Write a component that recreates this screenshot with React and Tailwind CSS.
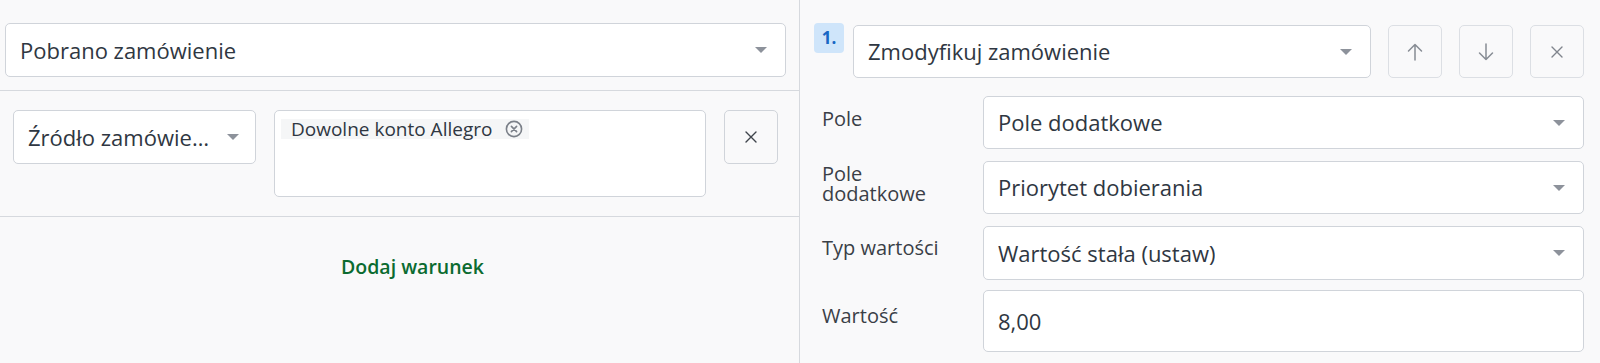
import React from "react";

function Caret() {
  return (
    <span className="block shrink-0 w-0 h-0 border-l-[6.5px] border-r-[6.5px] border-t-[6px] border-l-transparent border-r-transparent border-t-[#8d929b]" />
  );
}

function Select({ text, className = "" }) {
  return (
    <div
      className={`flex items-center justify-between bg-white border border-[#d0d4da] rounded-[5px] pl-[14px] pr-[18px] ${className}`}
    >
      <span className="text-[22px] text-[#2f3742] truncate">{text}</span>
      <Caret />
    </div>
  );
}

function XIcon({ color = "#4a4f57", size = 12 }) {
  return (
    <svg width={size} height={size} viewBox="0 0 12 12" fill="none">
      <path d="M1 1L11 11M11 1L1 11" stroke={color} strokeWidth="1.4" strokeLinecap="round" />
    </svg>
  );
}

function ArrowUp() {
  return (
    <svg width="16" height="18" viewBox="0 0 16 18" fill="none">
      <path d="M8 17V1.5M1.5 8L8 1.5L14.5 8" stroke="#878c94" strokeWidth="1.5" strokeLinecap="round" strokeLinejoin="round" />
    </svg>
  );
}

function ArrowDown() {
  return (
    <svg width="16" height="18" viewBox="0 0 16 18" fill="none">
      <path d="M8 1V16.5M1.5 10L8 16.5L14.5 10" stroke="#878c94" strokeWidth="1.5" strokeLinecap="round" strokeLinejoin="round" />
    </svg>
  );
}

function CircleX() {
  return (
    <svg width="18" height="18" viewBox="0 0 18 18" fill="none">
      <circle cx="9" cy="9" r="7.6" stroke="#7b8089" strokeWidth="1.6" />
      <path d="M6.4 6.4L11.6 11.6M11.6 6.4L6.4 11.6" stroke="#7b8089" strokeWidth="1.6" strokeLinecap="round" />
    </svg>
  );
}

function IconButton({ children }) {
  return (
    <div className="w-[54px] h-[53px] shrink-0 flex items-center justify-center border border-[#dcdfe4] rounded-[5px]">
      {children}
    </div>
  );
}

export default function App() {
  return (
    <div
      className="w-[1600px] h-[363px] bg-[#f9f9fa] flex overflow-hidden"
      style={{ fontFamily: '"Open Sans", "Noto Sans", sans-serif' }}
    >
      {/* Left panel */}
      <div className="w-[800px] shrink-0 border-r border-[#d6d9de] flex flex-col">
        <div className="pl-[5px] pr-[13px] pt-[23px] pb-[13px] border-b border-[#d6d9de]">
          <Select text="Pobrano zamówienie" className="h-[54px]" />
        </div>
        <div className="pl-[13px] pr-[21px] pt-[19px] pb-[19px] border-b border-[#d6d9de] flex items-start gap-[18px]">
          <Select
            text="Źródło zamówienia"
            className="w-[243px] h-[54px] shrink-0 !pr-[16px] gap-[18px]"
          />
          <div className="flex-1 h-[87px] bg-white border border-[#d0d4da] rounded-[5px] pl-[6px] pt-[7px]">
            <div className="inline-flex items-center gap-[13px] bg-[#f5f6f7] pl-[10px] pr-[6px] h-[20px]">
              <span className="text-[19px] text-[#2f3742] leading-[20px]">Dowolne konto Allegro</span>
              <CircleX />
            </div>
          </div>
          <div className="w-[54px] h-[54px] shrink-0 flex items-center justify-center border border-[#d0d4da] rounded-[5px]">
            <XIcon color="#3f444c" size={12} />
          </div>
        </div>
        <div className="flex justify-center pl-[26px] pt-[38px]">
          <span className="text-[19.5px] font-semibold text-[#0b6b30] leading-[24px]">Dodaj warunek</span>
        </div>
      </div>

      {/* Right panel */}
      <div className="flex-1 pl-[14px] pr-[16px] pt-[23px]">
        <div className="flex items-start">
          <div className="w-[30px] h-[30px] shrink-0 rounded-[4px] bg-[#cfe5fa] flex items-center justify-center text-[17px] font-bold text-[#1767c4]">
            1.
          </div>
          <Select text="Zmodyfikuj zamówienie" className="ml-[9px] mt-[2px] flex-1 h-[53px]" />
          <div className="flex gap-[17px] ml-[17px] mt-[2px]">
            <IconButton>
              <ArrowUp />
            </IconButton>
            <IconButton>
              <ArrowDown />
            </IconButton>
            <IconButton>
              <XIcon color="#80858d" size={12} />
            </IconButton>
          </div>
        </div>

        <div className="ml-[8px] mt-[18px] flex flex-col gap-[12px]">
          <div className="flex items-start">
            <div className="w-[161px] shrink-0 pt-[13px] text-[20px] leading-[20px] text-[#3a3f47]">Pole</div>
            <Select text="Pole dodatkowe" className="flex-1 h-[53px]" />
          </div>
          <div className="flex items-start">
            <div className="w-[161px] shrink-0 pt-[3px] text-[20px] leading-[20px] text-[#3a3f47]">
              Pole
              <br />
              dodatkowe
            </div>
            <Select text="Priorytet dobierania" className="flex-1 h-[53px]" />
          </div>
          <div className="flex items-start">
            <div className="w-[161px] shrink-0 pt-[12px] text-[20px] leading-[20px] text-[#3a3f47]">Typ wartości</div>
            <Select text="Wartość stała (ustaw)" className="flex-1 h-[54px]" />
          </div>
          <div className="flex items-start -mt-[2px]">
            <div className="w-[161px] shrink-0 pt-[16px] text-[20px] leading-[20px] text-[#3a3f47]">Wartość</div>
            <div className="flex-1 h-[62px] bg-white border border-[#d0d4da] rounded-[5px] pl-[14px] flex items-center">
              <span className="text-[22px] text-[#2f3742]">8,00</span>
            </div>
          </div>
        </div>
      </div>
    </div>
  );
}
